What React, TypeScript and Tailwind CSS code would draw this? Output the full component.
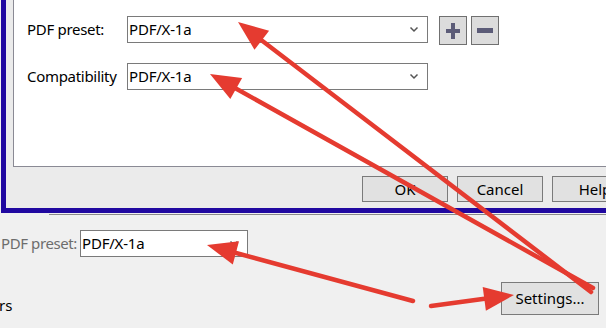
import React from "react";

const font = { fontFamily: '"Noto Sans", "Open Sans", sans-serif' };

function Chevron() {
  return (
    <svg width="10" height="7" viewBox="0 0 10 7" className="shrink-0">
      <path d="M1.5 1.5 L5 5 L8.5 1.5" fill="none" stroke="#555" strokeWidth="1.5" />
    </svg>
  );
}

function Combo({ w, text }: { w: string; text: string }) {
  return (
    <div className={`${w} h-[27px] shrink-0 bg-white border border-[#7a7a7a] flex items-center pl-[1px] pr-[8px]`}>
      <span className="flex-1 text-black text-[15px] leading-none whitespace-nowrap tracking-[-0.2px]">{text}</span>
      <Chevron />
    </div>
  );
}

function Btn({ label, w }: { label: string; w: string }) {
  return (
    <div className={`${w} h-[26px] bg-[#e1e1e1] border border-[#7a7a7a] flex items-center justify-center text-[15px] text-black leading-none shrink-0 whitespace-nowrap`}>
      {label}
    </div>
  );
}

export default function App() {
  return (
    <div className="relative w-[606px] h-[328px] bg-[#f0f0f0] overflow-hidden" style={font}>
      {/* dialog */}
      <div className="ml-[1px] w-[680px] h-[213px] border-l-[5px] border-b-[5px] border-[#2008a0] bg-[#ebebeb] pl-[7px] flex flex-col">
        <div className="h-[167px] bg-white border-l border-b border-[#8a8a94] pl-[13px] pt-[16px] flex flex-col gap-[18px]">
          <div className="flex items-start">
            <div className="w-[100px] h-[27px] flex items-center text-[15px] text-black whitespace-nowrap tracking-[-0.3px]">PDF preset:</div>
            <Combo w="w-[301px]" text="PDF/X-1a" />
            <div className="ml-[11px] flex gap-[4px]">
              <div className="w-[28px] h-[29px] bg-[#dcdcdc] border border-[#707070] flex items-center justify-center">
                <svg width="16" height="16" viewBox="0 0 16 16">
                  <rect x="1" y="6" width="14" height="4" fill="#5c5c78" />
                  <rect x="6" y="0" width="4" height="16" fill="#5c5c78" />
                </svg>
              </div>
              <div className="w-[28px] h-[29px] bg-[#dcdcdc] border border-[#707070] flex items-center justify-center">
                <svg width="16" height="6" viewBox="0 0 16 6">
                  <rect x="0" y="0" width="16" height="5" fill="#5c5c78" />
                </svg>
              </div>
            </div>
          </div>
          <div className="flex items-start">
            <div className="w-[100px] h-[27px] flex items-center text-[15px] text-black whitespace-nowrap tracking-[-0.3px]">Compatibility</div>
            <Combo w="w-[301px]" text="PDF/X-1a" />
          </div>
        </div>
        <div className="mt-[9px] pl-[349px] flex gap-[9px]">
          <Btn label="OK" w="w-[86px]" />
          <Btn label="Cancel" w="w-[86px]" />
          <Btn label="Help" w="w-[86px]" />
        </div>
      </div>
      {/* under dialog */}
      <div className="ml-[49px] mt-[1px] h-[1px] bg-[#8a8a8a]" />
      <div className="mt-[15px] flex items-center pl-[1px]">
        <div className="w-[79px] shrink-0 text-[15px] text-[#6d6d6d] whitespace-nowrap tracking-[-0.4px]">PDF preset:</div>
        <Combo w="w-[168px]" text="PDF/X-1a" />
      </div>
      <div className="mt-[25px] flex items-center justify-between pr-[7px]">
        <div className="-ml-[1px] self-end -mb-[1px] text-[15px] text-black whitespace-nowrap">rs</div>
        <div className="w-[98px] h-[33px] bg-[#e1e1e1] border border-[#7a7a7a] flex items-center justify-center text-[15px] text-black whitespace-nowrap">
          Settings...
        </div>
      </div>

      {/* annotation arrows */}
      <svg className="absolute inset-0 pointer-events-none" width="606" height="328" viewBox="0 0 606 328">
        <g stroke="#e53b30" strokeWidth="4.5" strokeLinecap="round" fill="none">
          <line x1="591" y1="292" x2="252" y2="33" />
          <line x1="593" y1="288" x2="226" y2="83" />
          <line x1="413" y1="301" x2="225" y2="250" />
          <line x1="431" y1="306" x2="490" y2="298" />
        </g>
        <g fill="#e53b30">
          <polygon points="238,22 254.5,49.7 269.1,30.7" />
          <polygon points="210,74 230.3,99.1 242.1,78.1" />
          <polygon points="207,245 232.8,264.5 239,241.3" />
          <polygon points="514,295 482.7,287 485.9,310.8" />
        </g>
      </svg>
    </div>
  );
}
